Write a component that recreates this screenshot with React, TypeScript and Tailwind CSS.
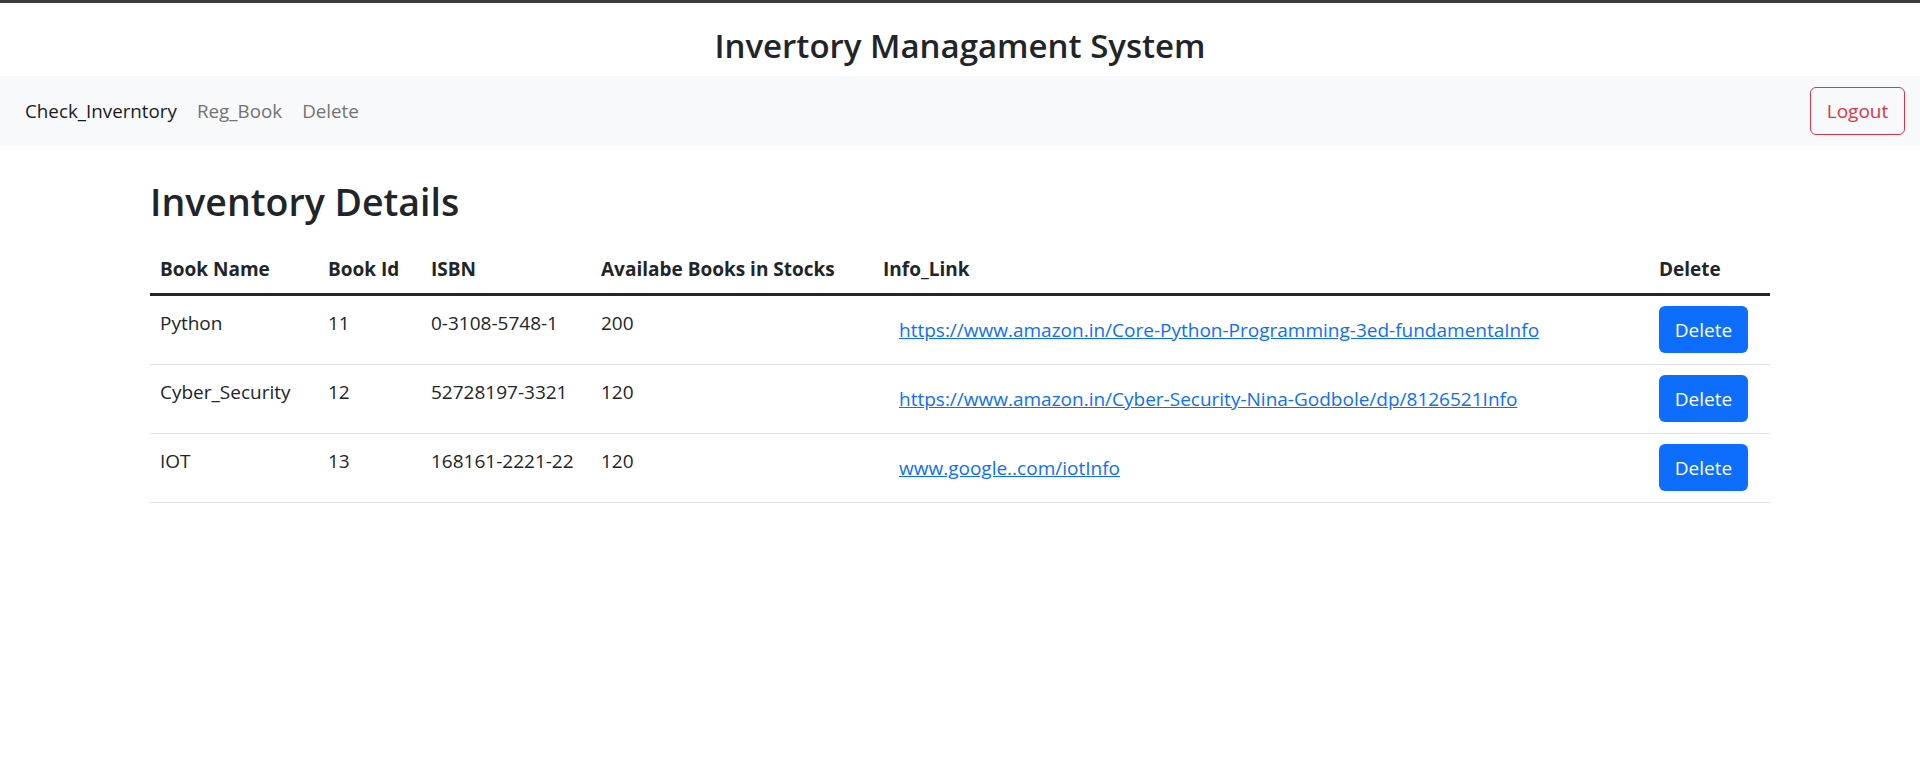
import React from "react";

const rows = [
  {
    name: "Python",
    id: "11",
    isbn: "0-3108-5748-1",
    stock: "200",
    link: "https://www.amazon.in/Core-Python-Programming-3ed-fundamentaInfo",
  },
  {
    name: "Cyber_Security",
    id: "12",
    isbn: "52728197-3321",
    stock: "120",
    link: "https://www.amazon.in/Cyber-Security-Nina-Godbole/dp/8126521Info",
  },
  {
    name: "IOT",
    id: "13",
    isbn: "168161-2221-22",
    stock: "120",
    link: "www.google..com/iotInfo",
  },
];

export default function App() {
  return (
    <div className="min-h-[782px] bg-white text-[#212529] font-['Open_Sans',sans-serif]">
      <div className="h-[3px] bg-[#3c3c3c]" />
      <div className="h-[73px] pt-[23px] text-center text-[33px] leading-[1.2] font-semibold">
        Invertory Managament System
      </div>
      <nav className="h-[70px] bg-[#f8f9fa] px-[15px] flex items-center justify-between">
        <div className="flex text-[18.8px] leading-[30px]">
          <a className="px-[10px] text-[#1a1a1a]">Check_Inverntory</a>
          <a className="px-[10px] text-[#737373]">Reg_Book</a>
          <a className="px-[10px] text-[#737373]">Delete</a>
        </div>
        <button className="w-[95px] h-[48px] border border-[#dc3545] rounded-[6px] text-[#dc3545] text-[19px] leading-[30px]">
          Logout
        </button>
      </nav>
      <div className="w-[1650px] mx-auto px-[15px] pt-[32px]">
        <h2 className="text-[37.5px] leading-[48px] font-semibold mb-[18px]">Inventory Details</h2>
        <table className="w-full table-fixed border-collapse text-[19px] leading-[30px]">
          <colgroup>
            <col className="w-[168px]" />
            <col className="w-[103px]" />
            <col className="w-[170px]" />
            <col className="w-[282px]" />
            <col className="w-[776px]" />
            <col className="w-[121px]" />
          </colgroup>
          <thead>
            <tr className="border-b-[3px] border-[#212529]">
              <th className="px-[10px] pt-[10px] pb-[9px] text-left font-bold">Book Name</th>
              <th className="px-[10px] pt-[10px] pb-[9px] text-left font-bold">Book Id</th>
              <th className="px-[10px] pt-[10px] pb-[9px] text-left font-bold">ISBN</th>
              <th className="px-[10px] pt-[10px] pb-[9px] text-left font-bold">Availabe Books in Stocks</th>
              <th className="px-[10px] pt-[10px] pb-[9px] text-left font-bold">Info_Link</th>
              <th className="px-[10px] pt-[10px] pb-[9px] text-left font-bold">Delete</th>
            </tr>
          </thead>
          <tbody>
            {rows.map((r) => (
              <tr key={r.id} className="border-b border-[#dee2e6]">
                <td className="px-[10px] pt-[12px] pb-[11px] align-top">{r.name}</td>
                <td className="px-[10px] pt-[12px] pb-[11px] align-top">{r.id}</td>
                <td className="px-[10px] pt-[12px] pb-[11px] align-top">{r.isbn}</td>
                <td className="px-[10px] pt-[12px] pb-[11px] align-top">{r.stock}</td>
                <td className="px-[10px] pt-[10px] pb-[11px] align-top">
                  <a className="inline-flex items-center h-[47px] px-[16px] text-[#0d6efd] underline whitespace-nowrap">
                    {r.link}
                  </a>
                </td>
                <td className="px-[10px] pt-[10px] pb-[11px] align-top">
                  <button className="block w-[89px] h-[47px] rounded-[6px] bg-[#0d6efd] text-white">
                    Delete
                  </button>
                </td>
              </tr>
            ))}
          </tbody>
        </table>
      </div>
    </div>
  );
}
